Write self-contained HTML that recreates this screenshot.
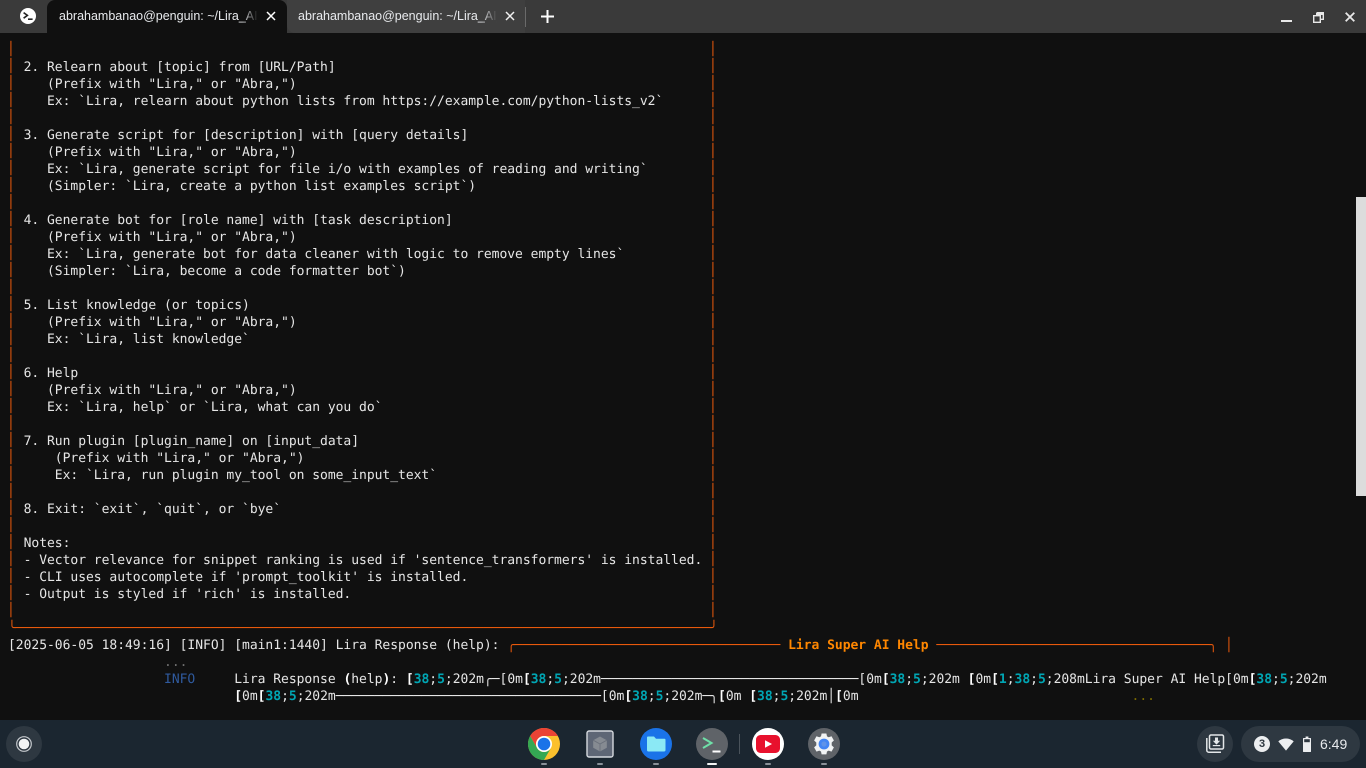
<!DOCTYPE html>
<html>
<head>
<meta charset="utf-8">
<style>
html,body{margin:0;padding:0;width:1366px;height:768px;overflow:hidden;background:#101010}
#bar{position:absolute;left:0;top:0;width:1366px;height:33px;background:#3a3a3a}
.tab{position:absolute;top:0;height:33px}
#t1{left:47px;width:240px;background:#101010;border-radius:8px 8px 0 0}
#t2{left:287px;width:238px;background:#3f3f3f;border-radius:0 0 0 8px}
.tt{position:absolute;top:0;height:33px;line-height:33px;width:199px;overflow:hidden;white-space:nowrap;font:12.5px/33px "Liberation Sans",sans-serif;color:#e8eaed;-webkit-mask-image:linear-gradient(to right,#000 92%,transparent 100%);mask-image:linear-gradient(to right,#000 92%,transparent 100%)}
pre{position:absolute;margin:0;font-family:"DejaVu Sans Mono","Liberation Mono",monospace;font-size:13px;line-height:17px;letter-spacing:-0.026px;color:#e6e6e6;text-rendering:geometricPrecision;font-kerning:none;white-space:pre}
.o{color:#e8590c}
.t{color:#ff8700;font-weight:bold}
.b{font-weight:bold;color:#fff}
i{font-style:normal;font-weight:bold;color:#00a6b4}
.blue{color:#2f5a9e}
.dim{color:#6f6f6f}
.yl{color:#7b6a00}
#sb{position:absolute;left:1356px;top:197px;width:10px;height:299px;background:#dcdcdc}
#shelf{position:absolute;left:0;top:720px;width:1366px;height:48px;background:#1b2630}
svg{position:absolute;display:block}
.d{position:absolute;top:763px;height:2px;width:6px;background:#8a9199;border-radius:1px}
#clock{position:absolute;left:1320px;top:735px;font:14px/18px "Liberation Sans",sans-serif;color:#e8eaed}
</style>
</head>
<body>
<div id="bar"></div>
<div class="tab" id="t1"></div>
<div class="tab" id="t2"></div>
<div class="tt" style="left:59px">abrahambanao@penguin: ~/Lira_AI_</div>
<div class="tt" style="left:298px">abrahambanao@penguin: ~/Lira_AI_</div>

<svg style="left:20px;top:8px" width="16" height="16" viewBox="0 0 16 16"><circle cx="8" cy="8" r="8" fill="#fff"/><path d="M3.6 4.6 7.4 7.4 3.6 10.2" fill="none" stroke="#222" stroke-width="1.6"/><path d="M8 11.2h4.6" stroke="#222" stroke-width="1.6"/></svg>
<svg style="left:266px;top:11px" width="10" height="10" viewBox="0 0 10 10"><path d="M1 1l8 8M9 1l-8 8" stroke="#fff" stroke-width="1.5"/></svg>
<svg style="left:505px;top:11px" width="10" height="10" viewBox="0 0 10 10"><path d="M1 1l8 8M9 1l-8 8" stroke="#f1f1f1" stroke-width="1.5"/></svg>
<div style="position:absolute;left:525px;top:7px;width:1px;height:20px;background:#6a6a6a"></div>
<svg style="left:541px;top:10px" width="13" height="13" viewBox="0 0 13 13"><path d="M6.5 0v13M0 6.5h13" stroke="#fff" stroke-width="2"/></svg>
<svg style="left:1281px;top:19px" width="11" height="4" viewBox="0 0 11 4"><rect y="1" width="11" height="2" fill="#e8e8e8"/></svg>
<svg style="left:1313px;top:12px" width="11" height="11" viewBox="0 0 11 11"><path d="M3.5.7h6.8v6.6H8" fill="none" stroke="#e8e8e8" stroke-width="1.4"/><rect x="3" y="1" width="7" height="2" fill="#e8e8e8"/><rect x=".7" y="3.7" width="6.6" height="6.6" fill="none" stroke="#e8e8e8" stroke-width="1.4"/></svg>
<svg style="left:1345px;top:12px" width="10" height="10" viewBox="0 0 10 10"><path d="M.7.7l8.6 8.6M9.3.7L.7 9.3" stroke="#e8e8e8" stroke-width="1.8"/></svg>

<pre class="o" style="left:7px;top:41px">│
│
│
│
│
│
│
│
│
│
│
│
│
│
│
│
│
│
│
│
│
│
│
│
│
│
│
│
│
│
│
│
│
│</pre>
<pre class="o" style="left:709px;top:41px">│
│
│
│
│
│
│
│
│
│
│
│
│
│
│
│
│
│
│
│
│
│
│
│
│
│
│
│
│
│
│
│
│
│</pre>
<pre style="left:8px;top:42px">

  2. Relearn about [topic] from [URL/Path]
     (Prefix with "Lira," or "Abra,")
     Ex: `Lira, relearn about python lists from https://example.com/python-lists_v2`

  3. Generate script for [description] with [query details]
     (Prefix with "Lira," or "Abra,")
     Ex: `Lira, generate script for file i/o with examples of reading and writing`
     (Simpler: `Lira, create a python list examples script`)

  4. Generate bot for [role name] with [task description]
     (Prefix with "Lira," or "Abra,")
     Ex: `Lira, generate bot for data cleaner with logic to remove empty lines`
     (Simpler: `Lira, become a code formatter bot`)

  5. List knowledge (or topics)
     (Prefix with "Lira," or "Abra,")
     Ex: `Lira, list knowledge`

  6. Help
     (Prefix with "Lira," or "Abra,")
     Ex: `Lira, help` or `Lira, what can you do`

  7. Run plugin [plugin_name] on [input_data]
      (Prefix with "Lira," or "Abra,")
      Ex: `Lira, run plugin my_tool on some_input_text`

  8. Exit: `exit`, `quit`, or `bye`

  Notes:
  - Vector relevance for snippet ranking is used if 'sentence_transformers' is installed.
  - CLI uses autocomplete if 'prompt_toolkit' is installed.
  - Output is styled if 'rich' is installed.

<span class="o">╰─────────────────────────────────────────────────────────────────────────────────────────╯</span>
[2025-06-05 18:49:16] [INFO] [main1:1440] Lira Response (help): <span class="o">╭──────────────────────────────────</span> <span class="t">Lira Super AI Help</span> <span class="o">───────────────────────────────────╮</span> <span class="o">│</span>
                    <span class="dim">...</span>
                    <span class="blue">INFO</span>     Lira Response <span class="b">(</span>help<span class="b">)</span>: <span class="b">[</span><i>38</i>;<i>5</i>;202m╭─[0m<span class="b">[</span><i>38</i>;<i>5</i>;202m─────────────────────────────────[0m<span class="b">[</span><i>38</i>;<i>5</i>;202m <span class="b">[</span>0m<span class="b">[</span><i>1</i>;<i>38</i>;<i>5</i>;208mLira Super AI Help[0m<span class="b">[</span><i>38</i>;<i>5</i>;202m
                             <span class="b">[</span>0m<span class="b">[</span><i>38</i>;<i>5</i>;202m──────────────────────────────────[0m<span class="b">[</span><i>38</i>;<i>5</i>;202m─╮<span class="b">[</span>0m <span class="b">[</span><i>38</i>;<i>5</i>;202m│<span class="b">[</span>0m                                   <span class="yl">...</span></pre>

<div id="sb"></div>
<div id="shelf"></div>

<svg style="left:6px;top:726px" width="36" height="36" viewBox="0 0 36 36"><circle cx="18" cy="18" r="18" fill="#2e3841"/><circle cx="18" cy="18" r="7.3" fill="none" stroke="#c4c8cc" stroke-width="1.2"/><circle cx="18" cy="18" r="5.3" fill="#f1f3f4"/></svg>

<!-- Chrome -->
<svg style="left:528px;top:728px" width="32" height="32" viewBox="0 0 32 32"><circle cx="16" cy="16" r="16" fill="#fbc02d"/><path d="M2.14 8A16 16 0 0 1 29.86 8H16A8 8 0 0 0 9.07 20Z" fill="#ea4335"/><path d="M2.14 8A16 16 0 0 0 16 32L22.93 20A8 8 0 0 1 9.07 20Z" fill="#34a853"/><circle cx="16" cy="16" r="8" fill="#fff"/><circle cx="16" cy="16" r="6.3" fill="#1a73e8"/></svg>
<!-- Box -->
<svg style="left:586px;top:730px" width="28" height="28" viewBox="0 0 28 28"><rect x="1" y="1" width="26" height="26" rx="2" fill="#5e6675" stroke="#d5d9de" stroke-width="1.4"/><path d="M14 6.5 20.8 10.2V17.8L14 21.5 7.2 17.8V10.2Z" fill="#868b92"/><path d="M7.2 10.2 14 14 20.8 10.2M14 14v7.5" fill="none" stroke="#6a707b" stroke-width=".9"/></svg>
<!-- Files -->
<svg style="left:640px;top:728px" width="32" height="32" viewBox="0 0 32 32"><circle cx="16" cy="16" r="16" fill="#1a73e8"/><path d="M7 9.5a1 1 0 0 1 1-1h6l2 2.2h8.5a1 1 0 0 1 1 1V22a1.5 1.5 0 0 1-1.5 1.5H8.5A1.5 1.5 0 0 1 7 22Z" fill="#8be9f5"/></svg>
<!-- Terminal -->
<svg style="left:696px;top:728px" width="32" height="32" viewBox="0 0 32 32"><circle cx="16" cy="16" r="16" fill="#5f6368"/><path d="M7 10 15.5 15 7 20" fill="none" stroke="#6fe0a8" stroke-width="2"/><path d="M16.5 23.5h8" stroke="#fff" stroke-width="2"/></svg>
<div style="position:absolute;left:739px;top:734px;width:1px;height:20px;background:#4a535b"></div>
<!-- YouTube -->
<svg style="left:752px;top:728px" width="32" height="32" viewBox="0 0 32 32"><circle cx="16" cy="16" r="16" fill="#fff"/><rect x="4" y="7" width="24" height="18" rx="4.5" fill="#e8112d"/><path d="M13 12.2 20 16 13 19.8Z" fill="#fff"/></svg>
<!-- Settings -->
<svg style="left:808px;top:728px" width="32" height="32" viewBox="0 0 32 32"><circle cx="16" cy="16" r="16" fill="#5f6368"/><path d="M13.6 5.5h4.8l.6 2.9 1.7.9 2.8-1 2.4 4.2-2.2 2v2.9l2.2 2-2.4 4.2-2.8-1-1.7.9-.6 2.9h-4.8l-.6-2.9-1.7-.9-2.8 1-2.4-4.2 2.2-2v-2.9l-2.2-2 2.4-4.2 2.8 1 1.7-.9Z" fill="#f1f3f4"/><circle cx="16" cy="16" r="5.4" fill="#4285f4"/><circle cx="16" cy="16" r="2.6" fill="#5f93e8"/></svg>

<div class="d" style="left:541px"></div>
<div class="d" style="left:597px"></div>
<div class="d" style="left:653px"></div>
<div class="d" style="left:707px;width:10px;background:#f1f3f4"></div>
<div class="d" style="left:765px"></div>
<div class="d" style="left:821px"></div>

<!-- Holding space -->
<svg style="left:1197px;top:726px" width="36" height="36" viewBox="0 0 36 36"><circle cx="18" cy="18" r="18" fill="#2e3841"/><rect x="12.5" y="9" width="14" height="14" rx="1.5" fill="none" stroke="#e3e6e8" stroke-width="1.5"/><path d="M9.8 12v12.2a2 2 0 0 0 2 2H24" fill="none" stroke="#e3e6e8" stroke-width="1.5"/><path d="M18 11.5h3v3.2h2.2L19.5 18.6 15.8 14.7H18Z" fill="#e3e6e8"/><path d="M15.8 19.6h7.4" stroke="#e3e6e8" stroke-width="1.2"/></svg>

<div style="position:absolute;left:1241px;top:726px;width:119px;height:36px;border-radius:18px;background:#2e3841"></div>
<svg style="left:1254px;top:736px" width="16" height="16" viewBox="0 0 16 16"><circle cx="8" cy="8" r="8" fill="#eceef0"/></svg>
<div style="position:absolute;left:1254px;top:736px;width:16px;height:16px;text-align:center;font:bold 11px/16px 'Liberation Sans',sans-serif;color:#2e3841">3</div>
<svg style="left:1278px;top:738px" width="16" height="13" viewBox="0 0 16 13"><path d="M.3 3.4C4.6-.4 11.4-.4 15.7 3.4L8 12.6Z" fill="#eceef0"/></svg>
<svg style="left:1303px;top:736px" width="8" height="16" viewBox="0 0 8 16"><path d="M2.6.5h2.8V2H7.5a.5.5 0 0 1 .5.5v13a.5.5 0 0 1-.5.5H.5a.5.5 0 0 1-.5-.5v-13A.5.5 0 0 1 .5 2h2.1Z" fill="#eceef0"/><rect x="1.2" y="3.2" width="5.6" height="3" fill="#2e3841"/></svg>
<div id="clock">6:49</div>
</body>
</html>
